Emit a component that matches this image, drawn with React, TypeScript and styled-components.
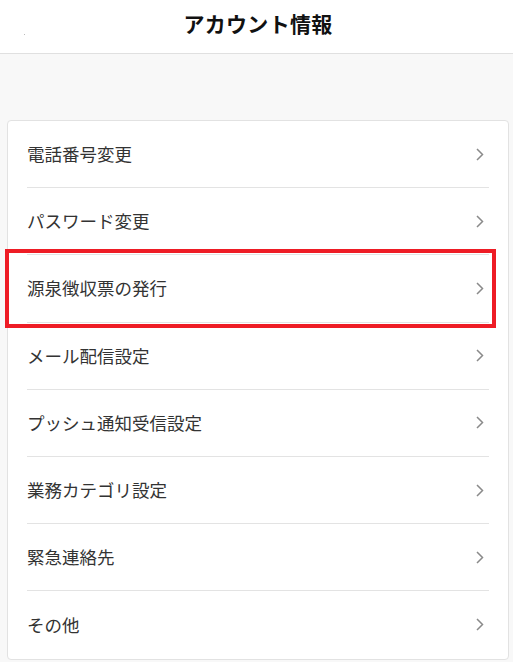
import React from "react";
import styled, { createGlobalStyle } from "styled-components";

const Global = createGlobalStyle`
  html, body { margin: 0; padding: 0; background: #f8f8f8; }
  body { font-family: "Noto Sans CJK JP", "Noto Sans", sans-serif; }
`;

const Page = styled.div`
  width: 513px;
  min-height: 662px;
  background: #f8f8f8;
`;

const Header = styled.header`
  position: relative;
  height: 54px;
  box-sizing: border-box;
  padding-bottom: 6px;
  background: #fff;
  border-bottom: 1px solid #e0e0e0;
  display: flex;
  align-items: center;
  justify-content: center;
`;

const Title = styled.h1`
  margin: 0 0 0 3px;
  font-size: 21px;
  line-height: 1;
  font-weight: 700;
  color: #111;
  letter-spacing: 0.3px;
`;

const BackDot = styled.span`
  position: absolute;
  left: 24px;
  top: 34px;
  width: 1px;
  height: 1px;
  background: #bbb;
`;

const Body = styled.main`
  padding: 66px 4px 4px 7px;
`;

const Card = styled.ul`
  position: relative;
  margin: 0;
  padding: 0;
  list-style: none;
  background: #fff;
  border: 1px solid #e2e2e2;
  border-radius: 4px;
`;

const Row = styled.li<{ $last?: boolean }>`
  position: relative;
  height: 67.2px;
  margin: 0 19px;
  box-sizing: border-box;
  border-bottom: ${(p) => (p.$last ? "none" : "1px solid #e3e3e3")};
  display: flex;
  align-items: center;
  justify-content: space-between;
`;

const Label = styled.span`
  font-size: 17.5px;
  color: #333;
  margin-top: -1px;
`;

const Chevron = styled.svg`
  width: 8px;
  height: 13px;
  margin-right: 5px;
  flex: none;
`;

const Highlight = styled.div`
  position: absolute;
  left: -22px;
  right: -7px;
  top: -6px;
  bottom: -6px;
  border: 4px solid #ee1c25;
  pointer-events: none;
`;

const items = [
  "電話番号変更",
  "パスワード変更",
  "源泉徴収票の発行",
  "メール配信設定",
  "プッシュ通知受信設定",
  "業務カテゴリ設定",
  "緊急連絡先",
  "その他",
];

export default function App() {
  return (
    <Page>
      <Global />
      <Header>
        <BackDot />
        <Title>アカウント情報</Title>
      </Header>
      <Body>
        <Card>
          {items.map((t, i) => (
            <Row key={t} $last={i === items.length - 1}>
              <Label>{t}</Label>
              <Chevron viewBox="0 0 8 13">
                <path d="M1 1 L6.5 6.5 L1 12" fill="none" stroke="#8a8a8a" strokeWidth="1.5" />
              </Chevron>
              {i === 2 && <Highlight />}
            </Row>
          ))}
        </Card>
      </Body>
    </Page>
  );
}
